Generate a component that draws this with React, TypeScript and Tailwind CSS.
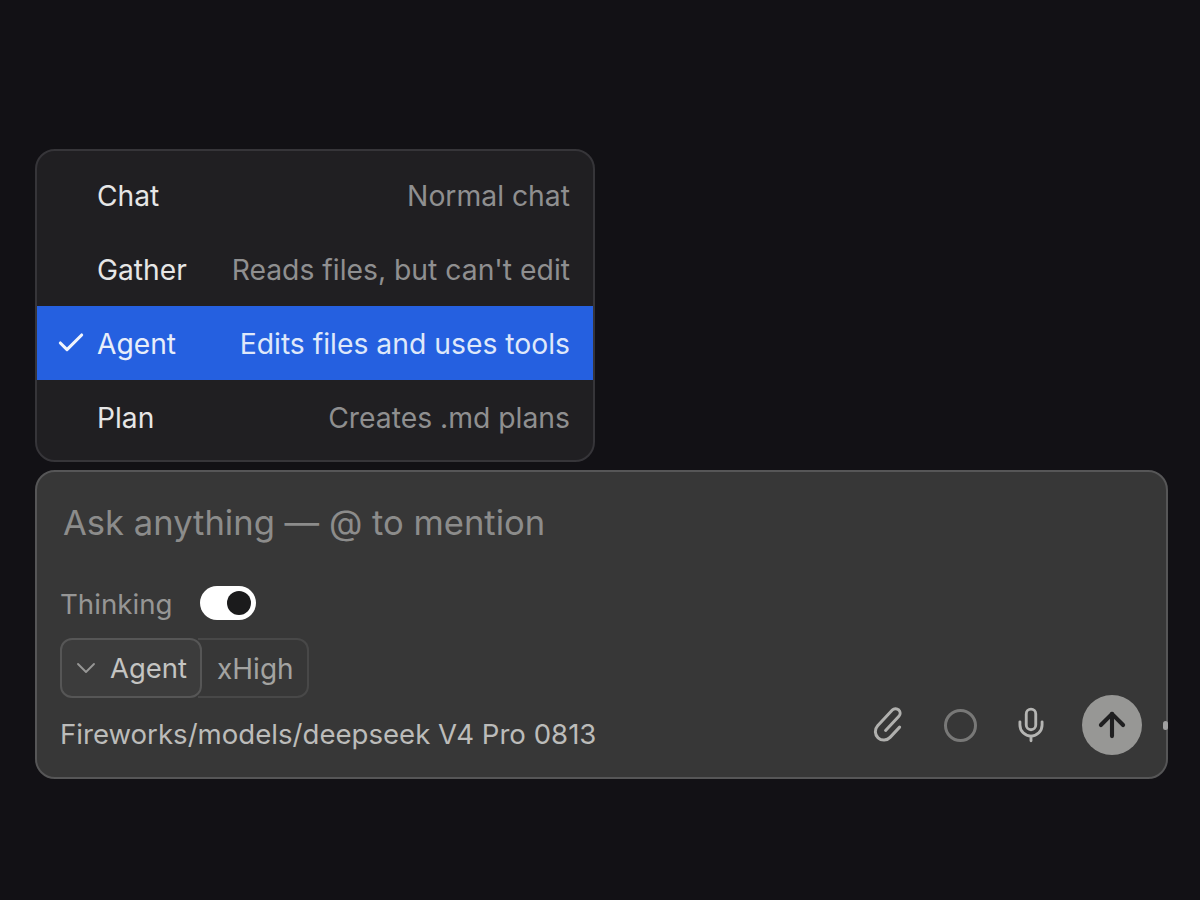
import { Check, ChevronDown, Mic, ArrowUp } from "lucide-react";

const modes = [
  { name: "Chat", desc: "Normal chat" },
  { name: "Gather", desc: "Reads files, but can't edit" },
  { name: "Agent", desc: "Edits files and uses tools", active: true },
  { name: "Plan", desc: "Creates .md plans" },
];

function ClipIcon() {
  return (
    <svg viewBox="0 0 36 36" fill="none" stroke="currentColor" strokeWidth="3" strokeLinecap="round" className="w-[36px] h-[36px] overflow-visible text-[#b0b0ae]">
      <g transform="rotate(43 18 18)">
        <path d="M26.5 13V27a8.5 8.5 0 0 1-17 0V5.5a4.5 4.5 0 0 1 9 0V25" />
      </g>
    </svg>
  );
}

export default function App() {
  return (
    <div className="min-h-[900px] bg-[#121115] pt-[149px] pl-[35px] pr-[32px] font-['Inter',sans-serif] overflow-hidden">
      <div className="w-[560px] h-[313px] rounded-[20px] border-2 border-[#363539] bg-[#201f22] pt-[7px] overflow-hidden">
        {modes.map((m) => (
          <div
            key={m.name}
            className={`h-[74px] flex items-center pr-[23px] ${m.active ? "bg-[#2560e0]" : ""}`}
          >
            <div className="w-[60px] pl-[18px]">
              {m.active && <Check className="w-[32px] h-[32px] text-[#f0f4fc]" strokeWidth={2.3} />}
            </div>
            <span className={`pt-[2px] text-[28.2px] ${m.active ? "text-[#e8eefa]" : "text-[#e6e6e6]"}`}>{m.name}</span>
            <span className={`ml-auto pt-[2px] text-[28.3px] ${m.active ? "text-[#dfe8fa]" : "text-[#8f8f90]"}`}>{m.desc}</span>
          </div>
        ))}
      </div>
      <div className="relative mt-[8px] h-[309px] rounded-[20px] border-2 border-[#565657] bg-[#373737] pl-[23px] pr-[24px] pt-[28px]">
        <div className="pl-[3px] text-[34.6px] leading-[44px] text-[#8c8c8b]">Ask anything — @ to mention</div>
        <div className="mt-[42px] flex items-center h-[34px]">
          <span className="pt-[4px] text-[27.7px] text-[#969695]">Thinking</span>
          <div className="ml-[27px] w-[56px] h-[34px] rounded-full bg-white flex items-center justify-end pr-[5px]">
            <div className="w-[24px] h-[24px] rounded-full bg-[#1b1b1c]" />
          </div>
        </div>
        <div className="mt-[18px] flex h-[60px]">
          <div className="w-[142px] rounded-[12px] border-2 border-[#565656] bg-[#3c3c3c] flex items-center pl-[8px] z-10">
            <ChevronDown className="w-[32px] h-[32px] text-[#979796]" strokeWidth={1.4} />
            <span className="ml-[8px] pt-[2px] text-[27.5px] text-[#c4c4c2]">Agent</span>
          </div>
          <div className="-ml-[4px] w-[111px] rounded-r-[12px] border-2 border-l-0 border-[#484848] flex items-center pl-[19px]">
            <span className="pt-[2px] text-[28px] text-[#a3a3a1]">xHigh</span>
          </div>
        </div>
        <div className="-mt-[3px] flex items-start">
          <span className="mt-[19px] text-[27.6px] text-[#bcbcba]">Fireworks/models/deepseek V4 Pro 0813</span>
          <div className="ml-auto flex items-center">
            <ClipIcon />
            <div className="ml-[36px] w-[33px] h-[33px] rounded-full border-[3px] border-[#787877]" />
            <Mic className="ml-[35px] w-[38px] h-[38px] text-[#b5b5b3]" strokeWidth={1.8} />
            <div className="ml-[32px] w-[60px] h-[60px] rounded-full bg-[#979795] flex items-center justify-center">
              <ArrowUp className="w-[38px] h-[38px] text-[#1f1f20]" strokeWidth={2.6} />
            </div>
          </div>
        </div>
        <div className="absolute -right-[2px] top-[249px] w-[5px] h-[9px] rounded-full bg-[#a0a0a0]" />
      </div>
    </div>
  );
}
